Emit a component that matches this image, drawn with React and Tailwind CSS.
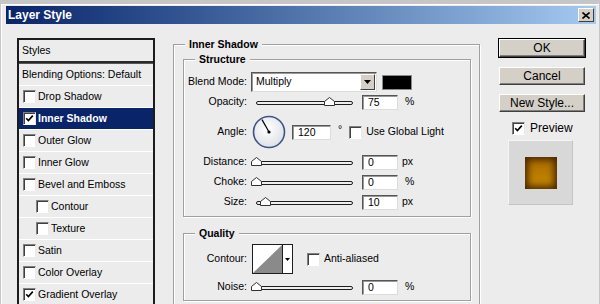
import React from 'react';

const styleItems = [
  { label: 'Drop Shadow' },
  { label: 'Inner Shadow', checked: true, active: true },
  { label: 'Outer Glow' },
  { label: 'Inner Glow' },
  { label: 'Bevel and Emboss' },
  { label: 'Contour', indent: true },
  { label: 'Texture', indent: true },
  { label: 'Satin' },
  { label: 'Color Overlay' },
  { label: 'Gradient Overlay', checked: true },
];

const Check = ({ checked }) => (
  <div className="w-[13px] h-[13px] shrink-0 bg-white border border-t-[#808080] border-l-[#808080] border-b-white border-r-[#e8e8e8] shadow-[inset_1px_1px_0_#404040] flex items-center justify-center">
    {checked && (
      <svg width="9" height="9" viewBox="0 0 9 9">
        <path d="M1.2 4.2 L3.4 6.6 L7.8 1.6" fill="none" stroke="#000" strokeWidth="1.6" />
      </svg>
    )}
  </div>
);

const Field = ({ value, className = 'w-[36px]' }) => (
  <div className={`${className} h-[15px] shrink-0 bg-white border border-t-[#555] border-l-[#555] border-b-[#dcdcdc] border-r-[#dcdcdc] shadow-[inset_1px_1px_0_#999] pl-[5px] text-[10.5px] leading-[13px] text-black`}>
    {value}
  </div>
);

// pos = thumb centre in px from the track's left edge
const Slider = ({ pos }) => (
  <div className="relative w-[97px] h-[11px] shrink-0">
    <div className="absolute left-0 right-0 top-[4px] h-[4px] rounded-[2px] border border-[#1e1e1e] bg-[#efefef]" />
    <svg className="absolute top-0" style={{ left: pos - 5 }} width="11" height="9" viewBox="0 0 11 9">
      <path d="M0.5 8.5 V4.5 L5.5 0.5 L10.5 4.5 V8.5 Z" fill="#fff" stroke="#333" />
    </svg>
  </div>
);

const Label = ({ children }) => (
  <div className="w-[63px] shrink-0 text-right text-[10.5px] text-black">{children}</div>
);

const SliderRow = ({ label, pos, value, unit, unitGap = 'ml-[7px]' }) => (
  <div className="flex items-center h-[20px]">
    <Label>{label}</Label>
    <div className="ml-[9px]">
      <Slider pos={pos} />
    </div>
    <div className="ml-[9px]">
      <Field value={value} />
    </div>
    <span className={`${unitGap} text-[10.5px] text-black`}>{unit}</span>
  </div>
);

const Group = ({ title, className = '', legendClass = 'ml-[11px]', children }) => (
  <fieldset className={`border border-[#a0a0a0] shadow-[inset_1px_1px_0_#fff,1px_1px_0_#fff] ${className}`}>
    <legend className={`${legendClass} px-[4px] bg-[#ececec] text-[10.5px] font-bold leading-[13px] text-black`}>
      {title}
    </legend>
    {children}
  </fieldset>
);

const Button = ({ children, isDefault }) => (
  <div className={isDefault ? 'border border-black' : 'border border-transparent'}>
    <div className="h-[18px] bg-[#d4d0c8] border border-t-white border-l-white border-b-[#404040] border-r-[#404040] shadow-[inset_-1px_-1px_0_#808080] flex items-center justify-center text-[12px] text-black">
      {children}
    </div>
  </div>
);

const Dial = () => (
  <svg width="34" height="34" viewBox="0 0 34 34" className="shrink-0">
    <defs>
      <radialGradient id="dialFill" cx="45%" cy="40%" r="65%">
        <stop offset="0%" stopColor="#ffffff" />
        <stop offset="100%" stopColor="#dcdfe6" />
      </radialGradient>
    </defs>
    <circle cx="17" cy="17" r="15.5" fill="url(#dialFill)" stroke="#3f5384" strokeWidth="1.6" />
    <line x1="17" y1="17" x2="10" y2="4.6" stroke="#000" strokeWidth="1.2" />
    <circle cx="17" cy="17" r="1.6" fill="#000" />
  </svg>
);

export default function App() {
  return (
    <div className="w-[600px] h-[304px] overflow-hidden bg-[#c6c6c6] pt-[4px] px-px font-['Liberation_Sans',Arial,sans-serif]">
      <div className="h-[310px] bg-[#ececec] border-t border-l border-white pt-px pl-[4px] pr-[3px]">
        {/* Title bar */}
        <div className="h-[18px] flex items-center justify-between bg-gradient-to-r from-[#0a246a] to-[#a6caf0] pl-[2px] pr-[2px]">
          <span className="text-[12px] font-bold text-white leading-none">Layer Style</span>
          <div className="w-[16px] h-[14px] bg-[#d4d0c8] border border-t-white border-l-white border-b-[#404040] border-r-[#404040] flex items-center justify-center">
            <svg width="8" height="7" viewBox="0 0 8 7">
              <path d="M0.5 0.5 L7.5 6.5 M7.5 0.5 L0.5 6.5" stroke="#000" strokeWidth="1.6" />
            </svg>
          </div>
        </div>

        <div className="flex items-start pl-[11px]">
          {/* Styles list */}
          <div className="mt-[14px] w-[138px] h-[300px] border-2 border-b-0 border-[#1c1c1c] bg-[#ececec]">
            <div className="h-[21px] flex items-center pl-[3px] text-[10.5px] text-black">Styles</div>
            <div className="h-[3px] border-t-2 border-b border-t-[#2a2a2a] border-b-[#555] bg-white" />
            <div className="h-[22px] flex items-center pl-[3px] border-b border-white text-[10.5px] text-black">
              Blending Options: Default
            </div>
            {styleItems.map((item) => (
              <div
                key={item.label}
                className={`h-[22px] flex items-center gap-[2px] border-b border-white text-[10.5px] ${
                  item.indent ? 'pl-[17px]' : 'pl-[4px]'
                } ${item.active ? 'bg-[#0a246a] text-white font-bold' : 'text-black'}`}
              >
                <Check checked={item.checked} />
                <span>{item.label}</span>
              </div>
            ))}
          </div>

          {/* Inner Shadow settings */}
          <Group
            title="Inner Shadow"
            legendClass="ml-[2px]"
            className="ml-[18px] mt-[14px] w-[307px] pl-[9px] pr-[8px] pb-[8px]"
          >
            <Group title="Structure" className="mt-[2px] pb-[4px]">
              <div className="pt-[6px]">
                <div className="flex items-center h-[20px]">
                  <Label>Blend Mode:</Label>
                  <div className="ml-[4px] w-[126px] h-[20px] bg-white border border-t-[#555] border-l-[#555] border-b-[#dcdcdc] border-r-[#dcdcdc] shadow-[inset_1px_1px_0_#999] flex items-center justify-between pr-px">
                    <span className="pl-[4px] text-[10.5px] text-black">Multiply</span>
                    <div className="w-[15px] h-[16px] bg-[#d4d0c8] border border-t-white border-l-white border-b-[#404040] border-r-[#404040] flex items-center justify-center">
                      <svg width="7" height="4" viewBox="0 0 7 4">
                        <path d="M0 0 H7 L3.5 4 Z" fill="#000" />
                      </svg>
                    </div>
                  </div>
                  <div className="ml-[5px] w-[30px] h-[15px] bg-black border border-[#8a8a8a]" />
                </div>
                <SliderRow label="Opacity:" pos={73} value="75" unit="%" />
                <div className="flex items-center h-[40px]">
                  <Label>Angle:</Label>
                  <div className="ml-[5px]">
                    <Dial />
                  </div>
                  <div className="ml-[6px]">
                    <Field value="120" className="w-[39px]" />
                  </div>
                  <span className="ml-[7px] text-[10.5px] text-black -mt-[4px]">°</span>
                  <div className="ml-[7px]">
                    <Check />
                  </div>
                  <span className="ml-[4px] text-[10.5px] text-black">Use Global Light</span>
                </div>
                <SliderRow label="Distance:" pos={0} value="0" unit="px" unitGap="ml-[4px]" />
                <SliderRow label="Choke:" pos={0} value="0" unit="%" />
                <SliderRow label="Size:" pos={9} value="10" unit="px" unitGap="ml-[4px]" />
              </div>
            </Group>

            <Group title="Quality" className="mt-[10px] pb-[3px]">
              <div className="pt-[3px]">
                <div className="flex items-center h-[32px]">
                  <Label>Contour:</Label>
                  <div className="ml-[5px] w-[41px] h-[30px] flex border border-[#1e1e1e] bg-white">
                    <svg width="29" height="28" viewBox="0 0 29 28" className="shrink-0">
                      <rect width="29" height="28" fill="#fff" />
                      <path d="M0 28 L29 0 V28 Z" fill="#8a8a8a" />
                    </svg>
                    <div className="flex-1 border-l border-[#1e1e1e] flex items-center justify-center">
                      <svg width="5" height="3" viewBox="0 0 5 3">
                        <path d="M0 0 H5 L2.5 3 Z" fill="#000" />
                      </svg>
                    </div>
                  </div>
                  <div className="ml-[14px]">
                    <Check />
                  </div>
                  <span className="ml-[4px] text-[10.5px] text-black">Anti-aliased</span>
                </div>
                <div className="mt-[2px]">
                  <SliderRow label="Noise:" pos={0} value="0" unit="%" />
                </div>
              </div>
            </Group>
          </Group>

          {/* Buttons & preview */}
          <div className="ml-[18px] mt-[14px] w-[88px] flex flex-col">
            <Button isDefault>OK</Button>
            <div className="mt-[8px]">
              <Button>Cancel</Button>
            </div>
            <div className="mt-[7px]">
              <Button>New Style...</Button>
            </div>
            <div className="mt-[8px] ml-[14px] h-[14px] flex items-center gap-[5px]">
              <Check checked />
              <span className="text-[12px] leading-none text-black">Preview</span>
            </div>
            <div className="mt-[5px] ml-[10px] w-[65px] h-[65px] bg-[#d8d8d8] border border-t-[#f6f6f6] border-l-[#f6f6f6] border-b-[#c4c4c4] border-r-[#c4c4c4] flex items-center justify-center">
              <div className="w-[32px] h-[32px] bg-gradient-to-b from-[#a86a00] to-[#c98c00] shadow-[inset_0_0_7px_3px_#4a2600]" />
            </div>
          </div>
        </div>
      </div>
    </div>
  );
}
